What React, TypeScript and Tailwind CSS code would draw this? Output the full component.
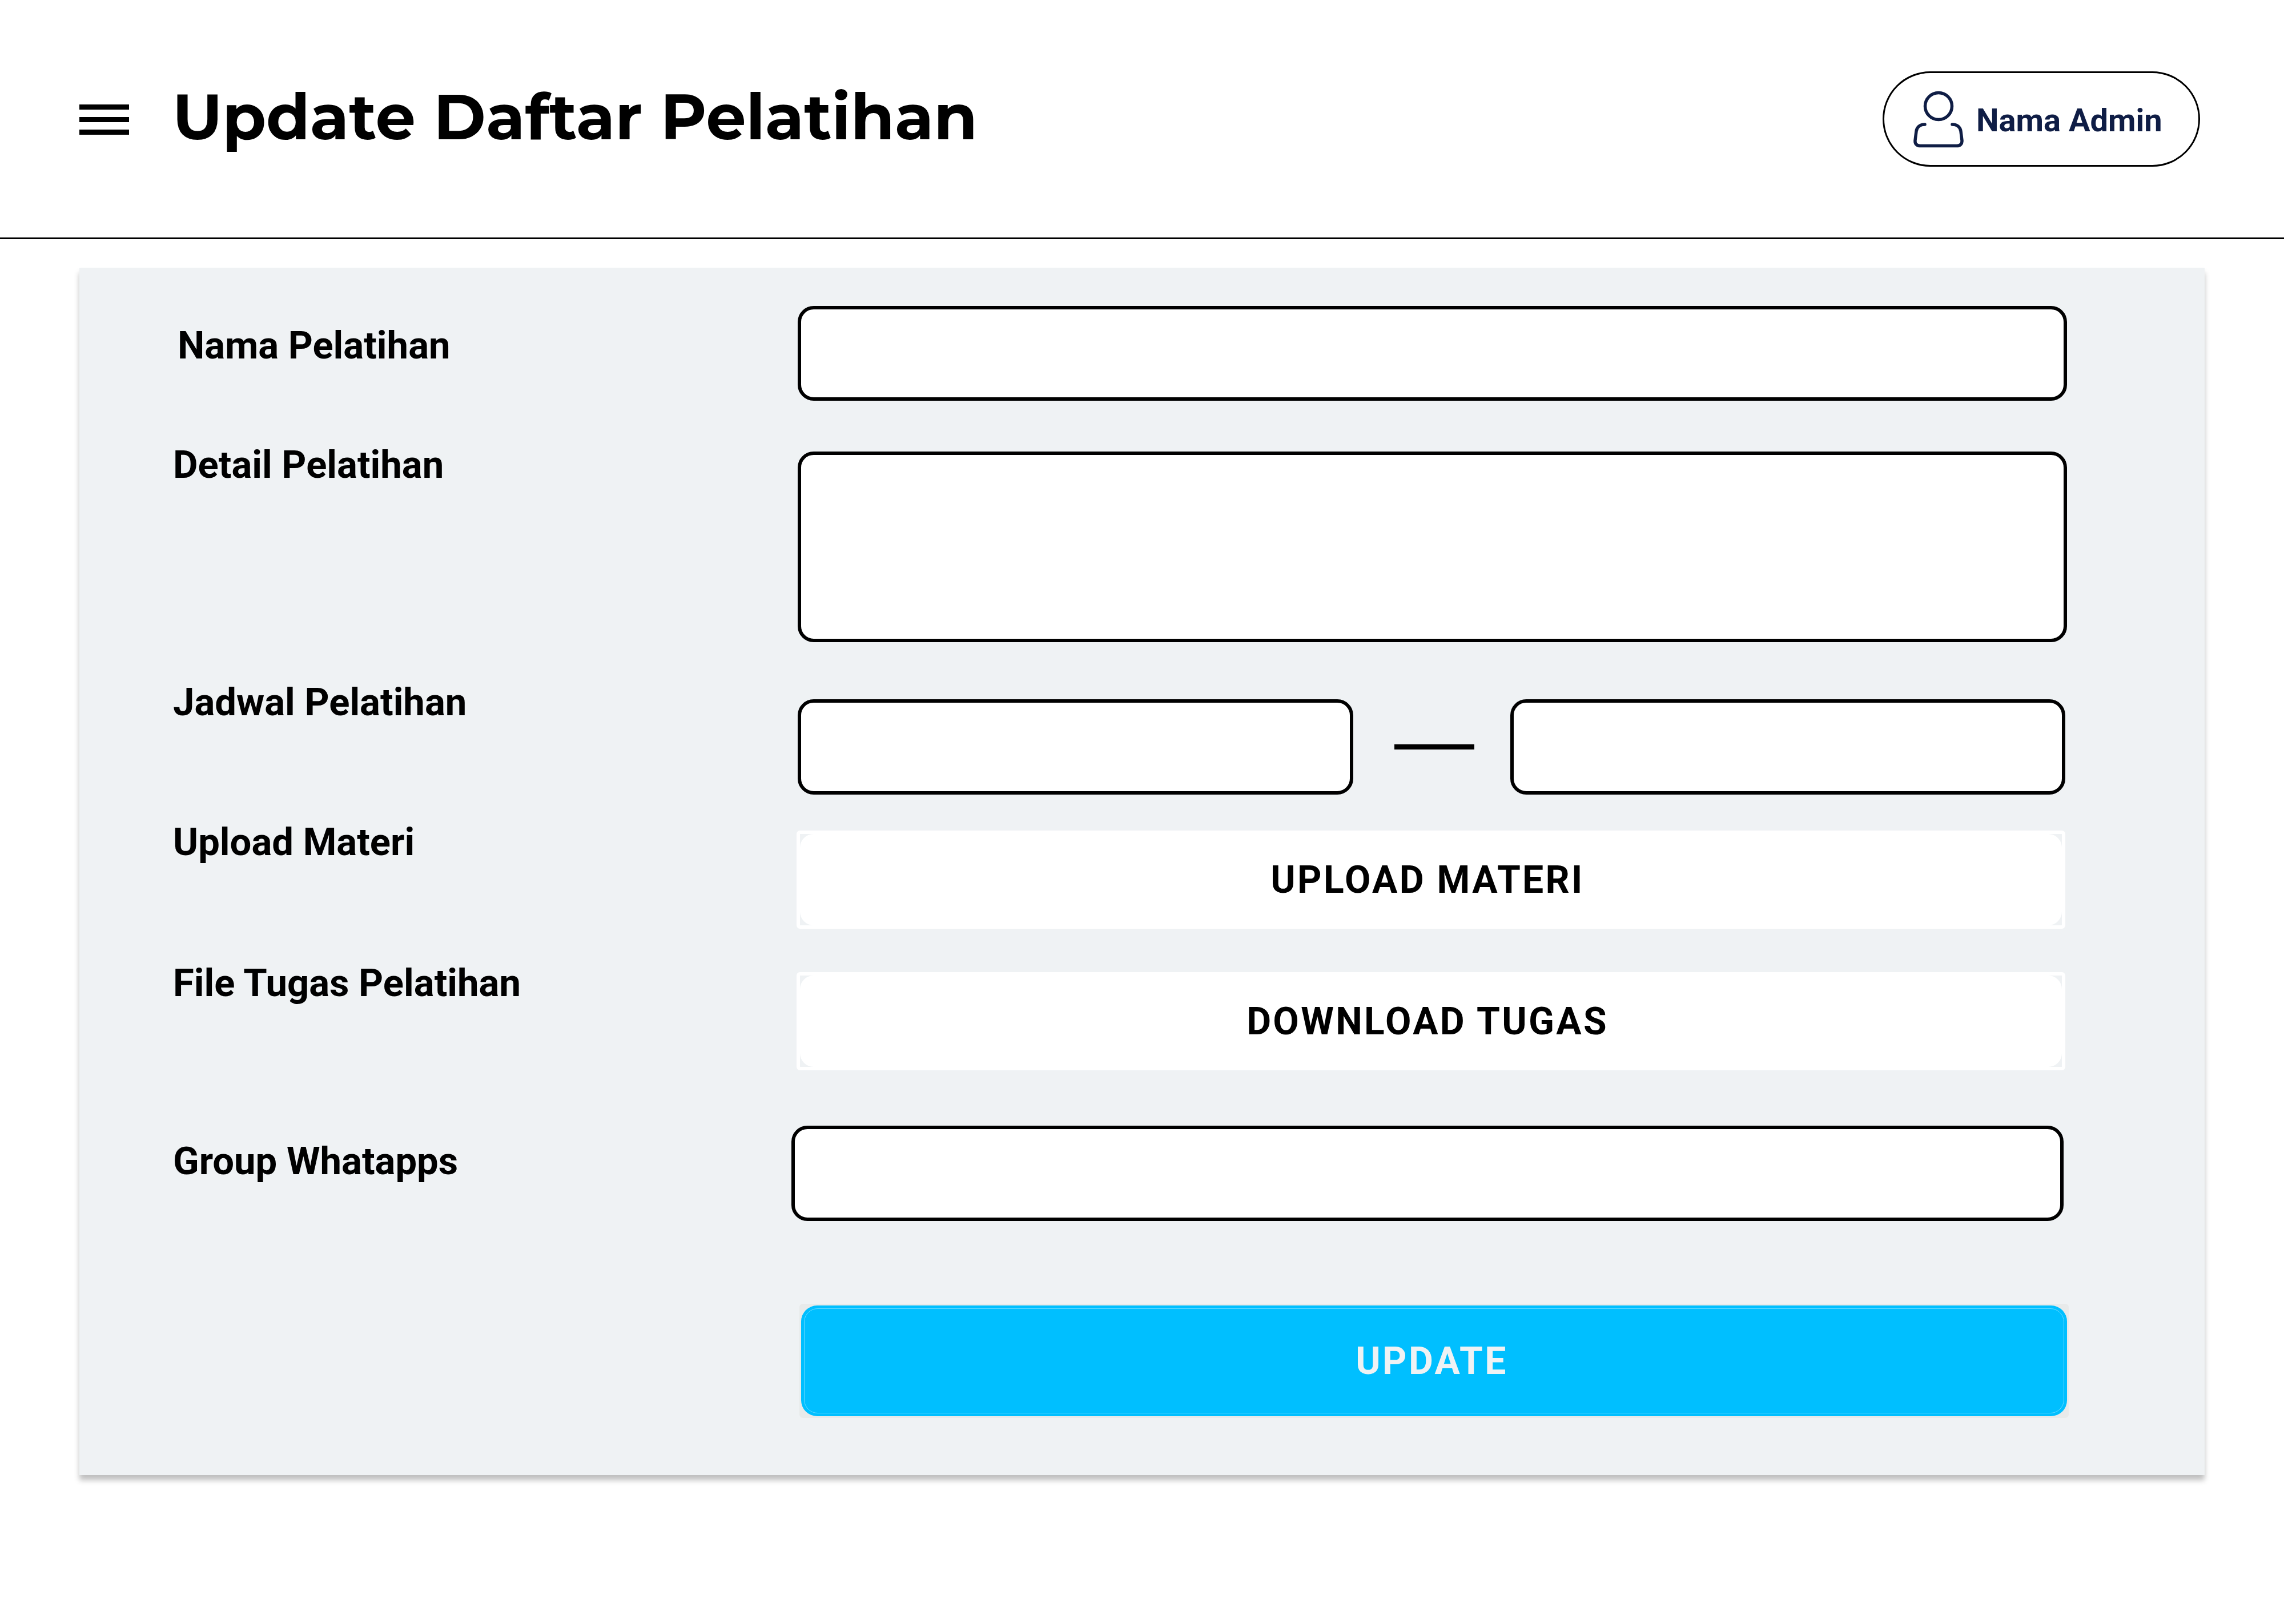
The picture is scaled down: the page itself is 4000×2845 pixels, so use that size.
import type { ReactNode } from "react";

const inputClass =
  "block w-full rounded-[28px] border-[6px] border-black bg-white px-10 text-[66px] text-black outline-none";

function Row({
  label,
  htmlFor,
  className,
  labelWidth = "w-[1094px]",
  labelClass = "",
  fieldClass = "",
  children,
}: {
  label?: string;
  htmlFor?: string;
  className: string;
  labelWidth?: string;
  labelClass?: string;
  fieldClass?: string;
  children: ReactNode;
}) {
  return (
    <div className={`flex items-start ${className}`}>
      <div className={`shrink-0 ${labelWidth} ${labelClass}`}>
        {label && (
          <label htmlFor={htmlFor} className="block text-[67px] leading-[80px] font-bold">
            {label}
          </label>
        )}
      </div>
      <div className={`min-w-0 flex-1 ${fieldClass}`}>{children}</div>
    </div>
  );
}

function FileButton({ id, children }: { id: string; children: ReactNode }) {
  return (
    <button
      id={id}
      type="button"
      className="block h-[172px] w-full rounded-md border-[6px] border-white bg-[#eff2f4] text-[66px] font-bold tracking-wider"
    >
      <span className="flex h-full items-center justify-center rounded-[24px] bg-white pr-3">{children}</span>
    </button>
  );
}

function UserIcon() {
  return (
    <svg
      viewBox="0 0 88 100"
      className="h-[100px] w-[88px] shrink-0"
      fill="none"
      stroke="currentColor"
      strokeWidth="5.5"
      strokeLinecap="round"
      aria-hidden="true"
    >
      <ellipse cx="44" cy="27" rx="23.5" ry="23.5" />
      <path d="M20 59C11 59 6 64 5 71L3 87C2.500 93 6 96.500 12 96.500H76C82 96.500 85.500 93 85 87L83 71C82 64 77 59 68 59" />
    </svg>
  );
}

export default function App() {
  return (
    <div className="min-h-screen bg-white font-['Roboto',sans-serif] text-black">
      <header className="flex h-[419px] items-start justify-between border-b-[3px] border-black pr-[147px] pl-[139px]">
        <div className="flex items-center pt-[137px]">
          <button type="button" aria-label="Menu" className="mt-2 flex w-[87px] flex-col gap-[13px]">
            <span className="h-[9px] bg-black" />
            <span className="h-[9px] bg-black" />
            <span className="h-[9px] bg-black" />
          </button>
          <h1 className="pl-[76px] font-['Montserrat','Inter',sans-serif] text-[111px] leading-[136px] font-bold whitespace-nowrap">
            Update Daftar Pelatihan
          </h1>
        </div>
        <button
          type="button"
          className="mt-[125px] flex h-[167px] w-[556px] items-center gap-[22px] rounded-full border-[3px] border-black pl-[51px] text-[56px] leading-[64px] font-bold whitespace-nowrap text-[#0f1d45]"
        >
          <UserIcon />
          <span className="pt-1">Nama Admin</span>
        </button>
      </header>

      <main className="px-[139px] pt-[50px] pb-[261px]">
        <form className="bg-[#eff2f4] pt-[67px] pr-[238px] pb-[100px] pl-[164px] shadow-[0_9px_9px_rgba(0,0,0,0.25)]">
          <Row label="Nama Pelatihan" htmlFor="nama" className="pr-[3px]" labelClass="pt-[29px] pl-2">
            <input id="nama" type="text" className={`${inputClass} h-[166px]`} />
          </Row>

          <Row label="Detail Pelatihan" htmlFor="detail" className="mt-[72px] pr-[3px]" fieldClass="pt-[17px]">
            <textarea id="detail" className={`${inputClass} h-[334px] resize-none`} />
          </Row>

          <Row label="Jadwal Pelatihan" htmlFor="mulai" className="mt-[65px] pr-[6px]" fieldClass="pt-[35px]">
            <div className="flex items-center">
              <input id="mulai" type="text" aria-label="Jadwal mulai" className={`${inputClass} h-[167px] min-w-0 flex-1`} />
              <span className="mr-[63px] ml-[72px] h-[9px] w-[140px] shrink-0 bg-black" />
              <input type="text" aria-label="Jadwal selesai" className={`${inputClass} h-[167px] min-w-0 flex-1`} />
            </div>
          </Row>

          <Row
            label="Upload Materi"
            htmlFor="materi"
            className="mt-[43px] pr-[6px]"
            labelWidth="w-[1092px]"
            fieldClass="pt-[20px]"
          >
            <FileButton id="materi">UPLOAD MATERI</FileButton>
          </Row>

          <Row
            label="File Tugas Pelatihan"
            htmlFor="tugas"
            className="mt-[55px] pr-[6px]"
            labelWidth="w-[1092px]"
            fieldClass="pt-[21px]"
          >
            <FileButton id="tugas">DOWNLOAD TUGAS</FileButton>
          </Row>

          <Row
            label="Group Whatapps"
            htmlFor="group"
            className="mt-[97px] pr-[9px]"
            labelWidth="w-[1083px]"
            labelClass="pt-[22px]"
          >
            <input id="group" type="text" className={`${inputClass} h-[167px]`} />
          </Row>

          <Row className="mt-[145px]" labelWidth="w-[1097px]">
            <button
              type="submit"
              className="block h-[200px] w-full rounded-md bg-[#e8eaea] p-[3px] text-[66px] font-bold tracking-wider text-[#eff2f4]"
            >
              <span className="block h-full rounded-[28px] bg-[#00bfff] p-[5px]">
                <span className="flex h-full items-center justify-center rounded-[24px] border border-[#66d9ff] pr-2">
                  UPDATE
                </span>
              </span>
            </button>
          </Row>
        </form>
      </main>
    </div>
  );
}
